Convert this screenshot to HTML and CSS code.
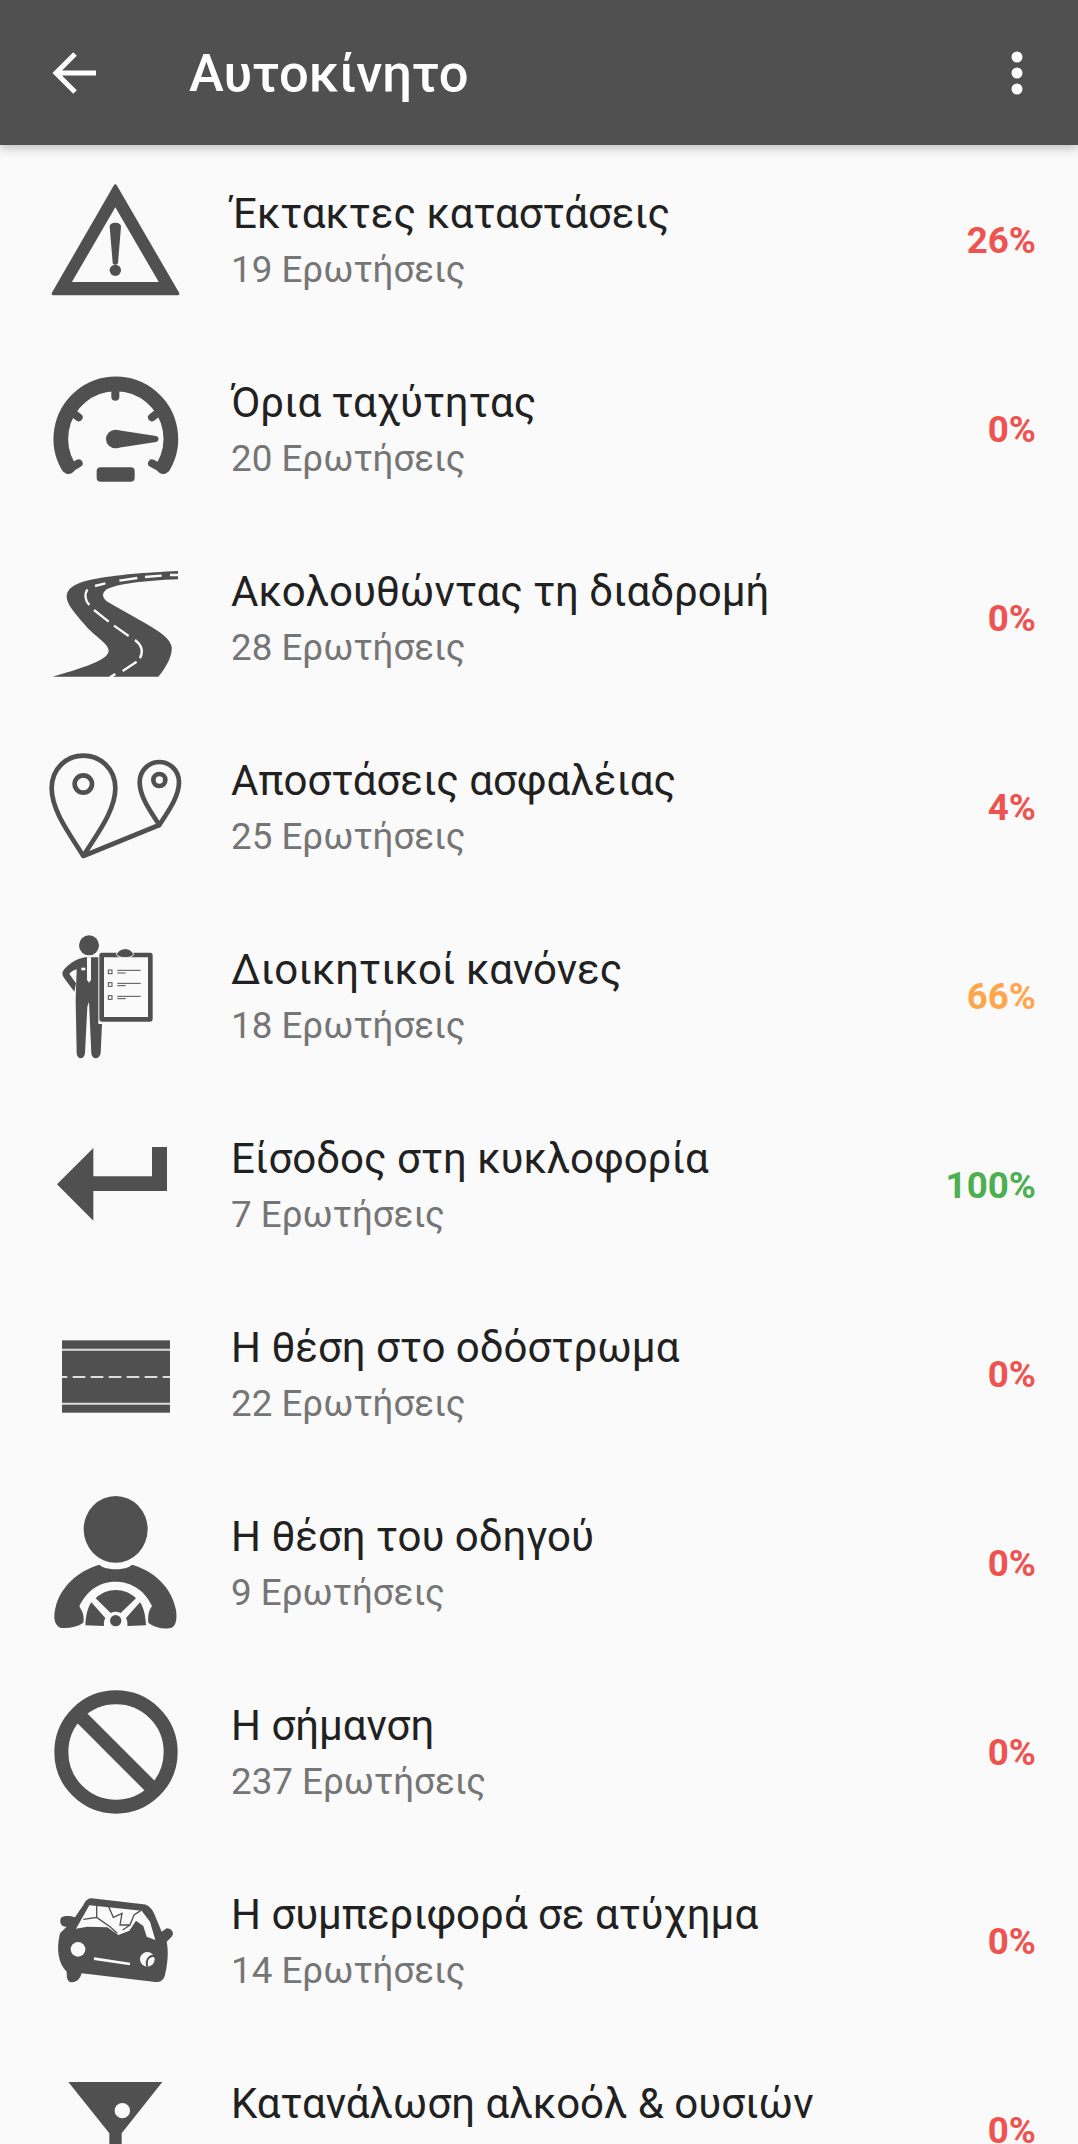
FILE: index.html
```html
<!DOCTYPE html>
<html lang="el">
<head>
  <meta charset="UTF-8">
  <meta name="viewport" content="width=device-width, initial-scale=1.0">
  <title>Αυτοκίνητο</title>
  <link rel="stylesheet" href="styles.css">
</head>
<body>

  <!-- Toolbar -->
  <header class="toolbar">
    <svg class="back-icon" viewBox="0 0 50 50"><path d="M46 25H6M25 6 6 25l19 19" fill="none" stroke="#fff" stroke-width="5"/></svg>
    <h1 class="toolbar-title">Αυτοκίνητο</h1>
    <svg class="menu-icon" viewBox="0 0 12 44"><circle cx="6" cy="6" r="5.5"/><circle cx="6" cy="22" r="5.5"/><circle cx="6" cy="38" r="5.5"/></svg>
  </header>

  <!-- Category list -->
  <main class="list">

    <div class="row">
      <svg class="icon" viewBox="138 510 420 420">
        <path fill-rule="evenodd" stroke="#505050" stroke-width="10" stroke-linejoin="round" d="M346 558 533 881H160ZM346 612 207 851H485Z"/>
        <path d="M329 680c0-16 34-16 34 0l-9 108c-1 8-15 8-16 0Z"/>
        <circle cx="346" cy="811" r="17"/>
      </svg>
      <div class="text"><div class="name">Έκτακτες καταστάσεις</div><div class="count">19 Ερωτήσεις</div></div>
      <div class="pct red">26%</div>
    </div>

    <div class="row">
      <svg class="icon" viewBox="48 27 420 420">
        <path d="M115 350A165 165 0 1 1 400 350" fill="none" stroke="#505050" stroke-width="44" stroke-linecap="round"/>
        <path d="M256 110V140M128 188 146 202M384 188 366 202M118 356 146 340M396 356 366 340" stroke="#505050" stroke-width="24" stroke-linecap="round"/>
        <circle cx="256" cy="267" r="28"/>
        <path d="M256 239 378 258c10 2 10 16 0 18L256 295Z"/>
        <rect x="200" y="352" width="114" height="43" rx="12"/>
      </svg>
      <div class="text"><div class="name">Όρια ταχύτητας</div><div class="count">20 Ερωτήσεις</div></div>
      <div class="pct red">0%</div>
    </div>

    <div class="row">
      <svg class="icon" viewBox="48 594 420 420">
        <path d="M444 663C350 667 250 675 190 688 150 696 115 708 110 735 108 760 130 785 165 825 195 860 235 880 236 902 235 925 190 945 68 980H385C410 950 428 915 425 890 420 868 395 848 350 822L240 760C222 750 212 735 225 722 250 702 340 692 444 688Z"/>
        <path d="M195 708 226 700M268 692 322 684M345 681 395 677M420 675H444M172 718C162 735 165 750 178 765M192 780 236 815M252 827 296 858M315 870C335 885 340 905 330 925M320 935 278 963M256 972 240 982" fill="none" stroke="#fafafa" stroke-width="7"/>
      </svg>
      <div class="text"><div class="name">Ακολουθώντας τη διαδρομή</div><div class="count">28 Ερωτήσεις</div></div>
      <div class="pct red">0%</div>
    </div>

    <div class="row">
      <svg class="icon" viewBox="48 51 420 420">
        <g fill="none" stroke="#505050" stroke-width="14" stroke-linejoin="round">
          <path d="M160 408C125 350 65 275 65 205 65 145 110 107 160 107 210 107 256 145 256 205 256 275 195 350 160 408L388 315"/>
          <path d="M388 315C362 275 329 230 329 187 329 150 358 126 388 126 418 126 447 150 447 187 447 230 414 275 388 315Z"/>
          <circle cx="160" cy="192" r="26"/>
          <circle cx="388" cy="180" r="18"/>
        </g>
      </svg>
      <div class="text"><div class="name">Αποστάσεις ασφαλέιας</div><div class="count">25 Ερωτήσεις</div></div>
      <div class="pct red">4%</div>
    </div>

    <div class="row">
      <svg class="icon" viewBox="48 618 420 420">
        <circle cx="177" cy="676" r="30"/>
        <path d="M165 712C140 715 110 735 98 755 95 765 100 770 105 778L133 815 138 790 118 762C125 752 135 750 140 748L137 840 140 1000C142 1020 162 1020 165 1000L172 860 177 845 184 1000C186 1020 208 1020 212 1000L216 912H205V712Z"/>
        <path d="M171 712H183V780L177 788 171 780Z" fill="#fafafa"/>
        <path d="M154 743H166V751H154Z" fill="#fafafa"/>
        <rect x="215" y="705" width="146" height="193" fill="none" stroke="#505050" stroke-width="14" stroke-linejoin="round"/>
        <path d="M259 704C264 692 274 686 286 686 298 686 308 694 311 704 304 716 268 716 259 704Z" stroke="#fafafa" stroke-width="3"/>
        <g fill="none" stroke="#505050" stroke-width="3">
          <rect x="235" y="750" width="11" height="11"/><rect x="235" y="788" width="11" height="11"/><rect x="235" y="827" width="11" height="11"/>
          <path d="M262 751H332M262 759H287M262 790H332M262 797H287M262 829H332M262 836H287"/>
        </g>
      </svg>
      <div class="text"><div class="name">Διοικητικοί κανόνες</div><div class="count">18 Ερωτήσεις</div></div>
      <div class="pct orange">66%</div>
    </div>

    <div class="row">
      <svg class="icon" viewBox="48 -15 420 420">
        <path d="M81 193 190 84V169H366V81H411V213H190V302Z"/>
      </svg>
      <div class="text"><div class="name">Είσοδος στη κυκλοφορία</div><div class="count">7 Ερωτήσεις</div></div>
      <div class="pct green">100%</div>
    </div>

    <div class="row">
      <svg class="icon" viewBox="48 552 420 420">
        <rect x="96" y="661" width="324" height="217"/>
        <path d="M96 689H420M96 851H420" stroke="#ddd" stroke-width="6"/>
        <path d="M96 771H420" stroke="#ddd" stroke-width="6" stroke-dasharray="38 16" stroke-dashoffset="22"/>
      </svg>
      <div class="text"><div class="name">Η θέση στο οδόστρωμα</div><div class="count">22 Ερωτήσεις</div></div>
      <div class="pct red">0%</div>
    </div>

    <div class="row">
      <svg class="icon" viewBox="48 39 420 420">
        <ellipse cx="257" cy="148" rx="96" ry="100"/>
        <path d="M208 254C225 272 290 272 306 254 370 272 425 320 438 390 442 420 438 440 420 445 395 447 370 440 355 428 352 395 362 385 366 378 340 320 290 305 257 305 215 305 175 325 148 378 152 390 165 400 160 428 140 442 110 447 90 443 72 435 70 410 76 385 90 320 145 272 208 254Z"/>
        <path d="M166 436C168 405 172 385 184 367L226 414C222 420 221 430 222 438Z"/>
        <path d="M348 436C346 405 342 385 330 367L288 414C292 420 293 430 292 438Z"/>
        <path d="M197 355C230 322 285 322 318 355L272 399C262 394 252 394 242 399Z"/>
        <circle cx="257" cy="422" r="17"/>
      </svg>
      <div class="text"><div class="name">Η θέση του οδηγού</div><div class="count">9 Ερωτήσεις</div></div>
      <div class="pct red">0%</div>
    </div>

    <div class="row">
      <svg class="icon" viewBox="48 36 420 420">
        <circle cx="258" cy="246" r="164" fill="none" stroke="#505050" stroke-width="42"/>
        <path d="M140 128 376 364" stroke="#505050" stroke-width="42"/>
      </svg>
      <div class="text"><div class="name">Η σήμανση</div><div class="count">237 Ερωτήσεις</div></div>
      <div class="pct red">0%</div>
    </div>

    <div class="row">
      <svg class="icon" viewBox="48 603 420 420">
        <path d="M185 685 340 703C355 705 365 715 372 730L395 785 410 775C425 775 435 790 425 800L410 815C415 840 415 870 405 915 400 935 385 938 370 935L155 910C150 925 145 935 125 937 112 935 110 925 110 905 85 880 78 840 90 790L110 770C95 772 88 760 92 745 100 735 120 738 135 742L160 705C168 690 175 685 185 685Z"/>
        <path d="M138 776 178 706 335 722 360 755 376 810 350 800 340 768 318 752 298 782 265 795 232 772 172 770Z" fill="#fafafa"/>
        <path d="M200 708V742L160 748M200 742 240 770 262 790M235 708 250 742 276 730 270 765 300 765 312 735 332 722M300 765 278 780" fill="none" stroke="#505050" stroke-width="4"/>
        <circle cx="144" cy="838" r="22" fill="#fafafa"/>
        <circle cx="352" cy="868" r="22" fill="#fafafa"/>
        <path d="M376 860C362 852 345 868 352 890" fill="none" stroke="#505050" stroke-width="6"/>
        <path d="M192 866 300 882" stroke="#fafafa" stroke-width="8"/>
      </svg>
      <div class="text"><div class="name">Η συμπεριφορά σε ατύχημα</div><div class="count">14 Ερωτήσεις</div></div>
      <div class="pct red">0%</div>
    </div>

    <div class="row">
      <svg class="icon" viewBox="48 1170 420 420">
        <path d="M115 1236H397L275 1390V1600H238V1390Z"/>
        <circle cx="277" cy="1322" r="23" fill="#fafafa"/>
      </svg>
      <div class="text"><div class="name">Κατανάλωση αλκοόλ &amp; ουσιών</div><div class="count">&nbsp;</div></div>
      <div class="pct red">0%</div>
    </div>

  </main>

</body>
</html>
```

FILE: styles.css
```css
html, body {
  height: 100%;
  overflow: hidden;
}

body {
  font-family: Roboto, "Noto Sans", sans-serif;
  background-color: #fafafa;
  margin: 0;
  padding: 0;
}

.toolbar {
  position: relative;
  z-index: 1;
  display: flex;
  align-items: center;
  height: 145px;
  background-color: #505050;
  box-shadow: 0 3px 10px rgba(0, 0, 0, 0.25);
}

.back-icon {
  width: 50px;
  height: 50px;
  margin-left: 50px;
}

.toolbar-title {
  flex: 1;
  margin: 0 0 0 89px;
  color: white;
  font-size: 52.5px;
  font-weight: 500;
}

.menu-icon {
  width: 12px;
  height: 44px;
  margin-right: 55px;
  fill: white;
}

.row {
  display: flex;
  align-items: center;
  height: 189px;
  padding-left: 46px;
  padding-right: 42px;
}

.icon {
  flex: none;
  width: 140px;
  height: 140px;
  margin-right: 45px;
  fill: #505050;
}

.text {
  flex: 1;
  padding-top: 5px;
}

.name {
  color: #212121;
  font-size: 42px;
  line-height: 55px;
}

.count {
  color: #757575;
  font-size: 36.75px;
  line-height: 57px;
}

.pct {
  padding-top: 1px;
  font-size: 36.75px;
  font-weight: 700;
}

.red {
  color: #ef5350;
}

.orange {
  color: #ffa64d;
}

.green {
  color: #4caf50;
}
```
